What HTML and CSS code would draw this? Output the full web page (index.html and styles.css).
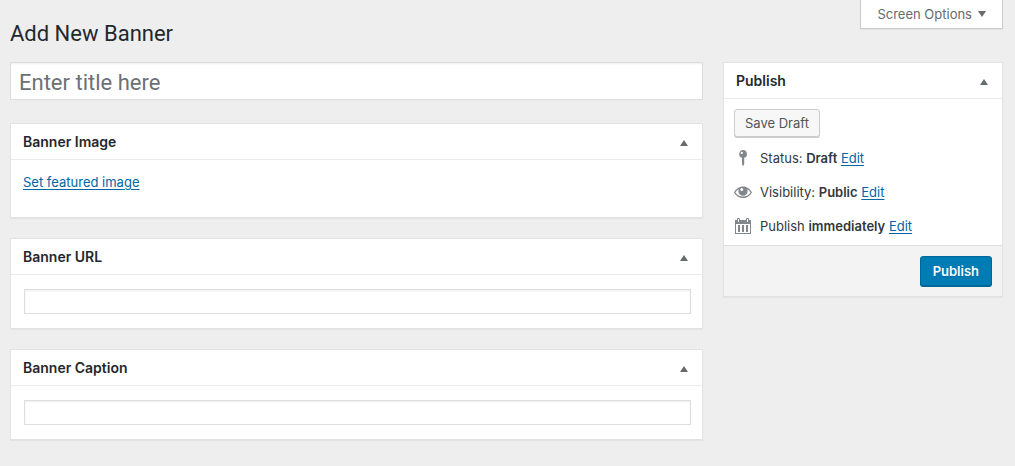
FILE: index.html
```
<!DOCTYPE html>
<html lang="en">
<head>
  <meta charset="UTF-8" />
  <title>Add New Banner</title>
  <meta name="viewport" content="width=device-width, initial-scale=1.0" />
  <link rel="stylesheet" href="styles.css">
</head>
<body>
  <header class="page-header">
    <h1>Add New Banner</h1>
    <button type="button" class="screen-options">Screen Options
      <svg class="arrow" viewBox="0 0 8 6"><path d="M0 0h8L4 6z"/></svg>
    </button>
  </header>

  <form class="editor">
    <main class="column">
      <input type="text" class="title-input" placeholder="Enter title here" aria-label="Enter title here">

      <section class="postbox">
        <div class="postbox-header">
          <h2>Banner Image</h2>
          <button type="button" class="toggle" aria-label="Toggle panel"><svg class="arrow" viewBox="0 0 8 6"><path d="M0 6h8L4 0z"/></svg></button>
        </div>
        <div class="inside image-inside">
          <a href="#">Set featured image</a>
        </div>
      </section>

      <section class="postbox">
        <div class="postbox-header">
          <h2><label for="bannerUrl">Banner URL</label></h2>
          <button type="button" class="toggle" aria-label="Toggle panel"><svg class="arrow" viewBox="0 0 8 6"><path d="M0 6h8L4 0z"/></svg></button>
        </div>
        <div class="inside">
          <input type="text" id="bannerUrl" class="text-input">
        </div>
      </section>

      <section class="postbox">
        <div class="postbox-header">
          <h2><label for="bannerCaption">Banner Caption</label></h2>
          <button type="button" class="toggle" aria-label="Toggle panel"><svg class="arrow" viewBox="0 0 8 6"><path d="M0 6h8L4 0z"/></svg></button>
        </div>
        <div class="inside">
          <input type="text" id="bannerCaption" class="text-input">
        </div>
      </section>
    </main>

    <aside class="sidebar">
      <section class="postbox">
        <div class="postbox-header">
          <h2>Publish</h2>
          <button type="button" class="toggle" aria-label="Toggle panel"><svg class="arrow" viewBox="0 0 8 6"><path d="M0 6h8L4 0z"/></svg></button>
        </div>
        <div class="publish-inside">
          <button type="button" class="button">Save Draft</button>
          <ul class="publish-list">
            <li>
              <svg class="icon" viewBox="0 0 18 18">
                <path fill-rule="evenodd" d="M9 1a4 4 0 0 1 1.200 7.800V15L9 17.500 8 15V8.800A4 4 0 0 1 9 1zM7.800 2.800a1.100 1.100 0 1 0 0 2.200 1.100 1.100 0 0 0 0-2.200z"/>
              </svg>
              <span>Status: <b>Draft</b> <a href="#">Edit</a></span>
            </li>
            <li>
              <svg class="icon" viewBox="0 0 18 18">
                <path fill-rule="evenodd" d="M9 3.500c4 0 7.200 2.500 9 6-1.800 3.500-5 5.500-9 5.500s-7.200-2-9-5.500c1.800-3.500 5-6 9-6zM5 6C3.500 6.800 2.200 8.100 1.400 9.500c1.700 2.600 4.300 4.100 7.600 4.100s5.900-1.500 7.600-4.100C15.800 8.100 14.500 6.800 13 6c.4.700.6 1.400.6 2.200a4.600 4.600 0 0 1-9.200 0C4.400 7.400 4.600 6.700 5 6zM7.800 5a1.500 1.500 0 1 0 0 3 1.500 1.500 0 0 0 0-3z"/>
              </svg>
              <span>Visibility: <b>Public</b> <a href="#">Edit</a></span>
            </li>
            <li>
              <svg class="icon" viewBox="0 0 18 18">
                <path fill-rule="evenodd" d="M1 3h16v14H1zM2 7v9h14V7z"/>
                <path d="M4 8h2v7H4zM8 8h2v7H8zM12 8h2v7h-2z"/>
                <path class="icon-line" d="M3.500 5V1.500h2V5M12.500 5V1.500h2V5"/>
              </svg>
              <span>Publish <b>immediately</b> <a href="#">Edit</a></span>
            </li>
          </ul>
        </div>
        <div class="publish-footer">
          <button type="submit" class="button button-primary">Publish</button>
        </div>
      </section>
    </aside>
  </form>
</body>
</html>
```

FILE: styles.css
```
* {
  box-sizing: border-box;
}

body {
  margin: 0;
  padding: 0 12px 20px 10px;
  font-family: Inter, "Liberation Sans", sans-serif;
  font-size: 13px;
  line-height: 18px;
  color: #32373c;
  background: #eee;
}

h1, h2, ul {
  margin: 0;
  padding: 0;
}

button, input {
  font: inherit;
}

button {
  cursor: pointer;
}

a {
  color: #0066a4;
  text-underline-offset: 2px;
}

b {
  font-weight: 600;
}

.page-header {
  display: flex;
  justify-content: space-between;
  align-items: flex-start;
}

h1, .title-input {
  font-family: Roboto, "Liberation Sans", sans-serif;
  font-size: 22px;
  font-weight: 400;
}

h1 {
  padding: 20px 0 14px;
  line-height: 28px;
  color: #23282d;
}

.screen-options {
  display: flex;
  align-items: center;
  gap: 6px;
  height: 29px;
  padding: 0 16px;
  border: 1px solid #ccc;
  border-top: none;
  background: #fff;
  color: #666b70;
  box-shadow: 0 1px 1px rgba(0, 0, 0, 0.04);
}

.arrow {
  width: 8px;
  height: 6px;
  fill: #666b70;
}

.editor {
  display: grid;
  grid-template-columns: 1fr 280px;
  gap: 20px;
  align-items: start;
}

.column {
  display: grid;
  gap: 20px;
}

.title-input {
  width: 100%;
  height: 38px;
  margin-bottom: 3px;
  padding: 2px 8px 0;
  border: 1px solid #ddd;
  background: #fff;
  box-shadow: inset 0 1px 2px rgba(0, 0, 0, 0.07);
}

.title-input::placeholder {
  color: #6c7176;
}

.postbox {
  border: 1px solid #e2e2e2;
  background: #fff;
  box-shadow: 0 1px 1px rgba(0, 0, 0, 0.04);
}

.postbox-header {
  display: flex;
  justify-content: space-between;
  align-items: center;
  height: 36px;
  padding-left: 12px;
  border-bottom: 1px solid #eaeaea;
}

h2 {
  font-size: 14px;
  font-weight: 600;
  color: #23282d;
}

.toggle {
  display: flex;
  justify-content: center;
  align-items: center;
  width: 36px;
  height: 35px;
  padding: 3px 0 0;
  border: none;
  background: none;
}

.inside {
  padding: 14px 11px 14px 13px;
}

.image-inside {
  padding: 13px 12px 26px;
}

.text-input {
  display: block;
  width: 100%;
  height: 25px;
  padding: 3px 5px;
  border: 1px solid #ddd;
  background: #fff;
  box-shadow: inset 0 1px 2px rgba(0, 0, 0, 0.07);
}

.publish-inside {
  padding: 10px 10px 2px;
}

.button {
  height: 28px;
  padding: 0 10px;
  border: 1px solid #ccc;
  border-radius: 3px;
  background: #f7f7f7;
  color: #555;
  box-shadow: 0 1px 0 #ccc;
}

.publish-list {
  list-style: none;
  padding-top: 4px;
}

.publish-list li {
  display: flex;
  align-items: center;
  gap: 8px;
  height: 34px;
}

.icon {
  width: 18px;
  height: 18px;
  fill: #82878c;
}

.icon-line {
  fill: #fff;
  stroke: #82878c;
}

.publish-footer {
  display: flex;
  justify-content: flex-end;
  padding: 10px;
  border-top: 1px solid #ddd;
  background: #f3f3f3;
}

.button-primary {
  height: 30px;
  padding: 0 12px;
  border-color: #006799;
  background: #007cb5;
  color: #fff;
  font-weight: 600;
  text-shadow: 0 1px 1px #006799;
  box-shadow: 0 1px 0 #006799;
}
```
